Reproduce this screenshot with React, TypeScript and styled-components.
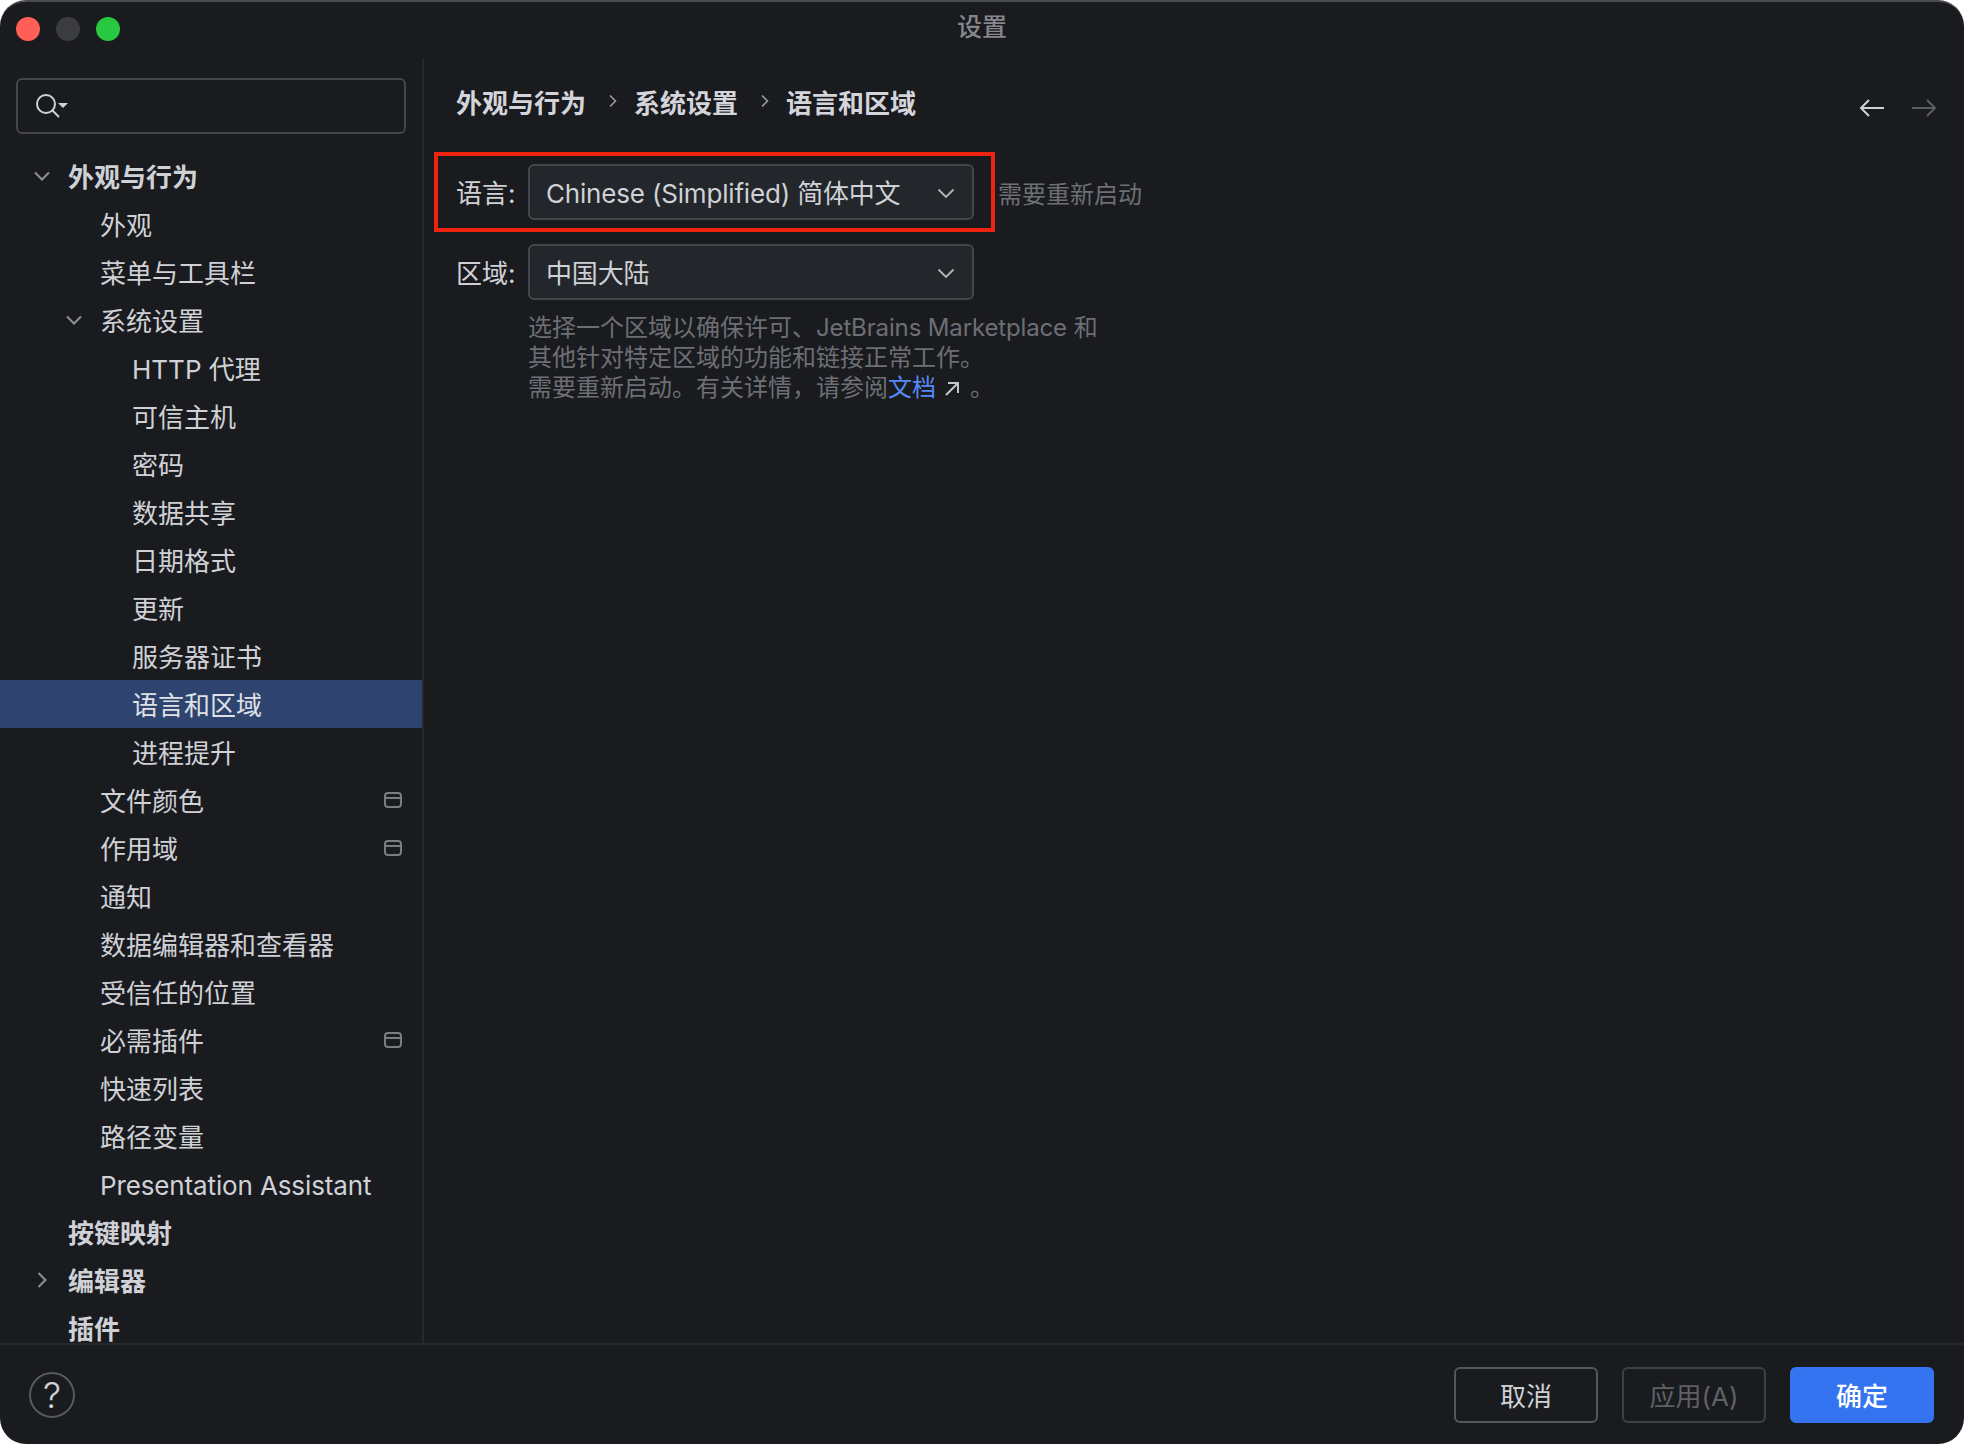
import React from 'react';
import styled, { createGlobalStyle } from 'styled-components';

const GlobalStyle = createGlobalStyle`
  html, body {
    margin: 0;
    padding: 0;
    background: #ffffff;
  }
  body {
    font-family: Inter, "Noto Sans CJK SC", sans-serif;
  }
`;

const colors = {
  bg: '#1a1b1f',
  line: '#26282c',
  text: '#cfd1d6',
  muted: '#6d6f75',
  border: '#44464b',
  selected: '#2e436e',
  blue: '#3574f0',
  link: '#548af7',
};

const Window = styled.div`
  width: 1964px;
  height: 1444px;
  background: ${colors.bg};
  border-radius: 26px;
  border-top: 2px solid #4a4b4f;
  box-sizing: border-box;
  display: flex;
  flex-direction: column;
  overflow: hidden;
  color: ${colors.text};
  font-size: 26px;
`;

const TitleBar = styled.div`
  height: 56px;
  flex: none;
  display: flex;
  align-items: center;
  position: relative;
  padding-left: 16px;
  gap: 16px;
`;

const Light = styled.span<{ $color: string }>`
  width: 24px;
  height: 24px;
  margin-top: -2px;
  border-radius: 50%;
  background: ${p => p.$color};
`;

const WindowTitle = styled.div`
  position: absolute;
  left: 0;
  right: 0;
  top: 7px;
  line-height: 36px;
  text-align: center;
  font-size: 25px;
  font-weight: 500;
  color: #85878c;
`;

const Body = styled.div`
  flex: 1;
  display: flex;
  min-height: 0;
`;

const Sidebar = styled.aside`
  width: 422px;
  flex: none;
  border-right: 2px solid ${colors.line};
  display: flex;
  flex-direction: column;
  overflow: hidden;
`;

const SearchBox = styled.div`
  margin: 20px 16px 18px 16px;
  height: 56px;
  flex: none;
  box-sizing: border-box;
  border: 2px solid ${colors.border};
  border-radius: 6px;
  display: flex;
  align-items: center;
  padding-left: 17px;
`;

const Row = styled.div<{ $depth: number; $bold?: boolean; $selected?: boolean; $latin?: boolean }>`
  height: 48px;
  flex: none;
  box-sizing: border-box;
  position: relative;
  display: flex;
  align-items: center;
  padding-left: ${p => 68 + p.$depth * 32}px;
  padding-bottom: ${p => (p.$latin ? 0 : 2)}px;
  padding-top: ${p => (p.$latin ? 2 : 0)}px;
  letter-spacing: ${p => (p.$latin ? '-0.13px' : 'normal')};
  background: ${p => (p.$selected ? colors.selected : 'transparent')};
  color: ${p => (p.$selected ? '#dfe1e6' : colors.text)};
  font-weight: ${p => (p.$bold ? 700 : 400)};
  white-space: nowrap;
`;

const Caret = styled.svg<{ $depth: number }>`
  position: absolute;
  left: ${p => 32 + p.$depth * 32}px;
  top: 14px;
  width: 20px;
  height: 20px;
  fill: none;
  stroke: #8f9197;
  stroke-width: 2;
`;

const ModuleIcon = styled.svg`
  position: absolute;
  left: 383px;
  top: 15px;
  width: 20px;
  height: 18px;
  fill: none;
  stroke: #7a7c82;
  stroke-width: 2;
`;

const Main = styled.main`
  flex: 1;
  min-width: 0;
  padding-left: 32px;
  position: relative;
`;

const Breadcrumbs = styled.div`
  height: 48px;
  margin-top: 19px;
  display: flex;
  align-items: center;
  font-weight: 700;
  color: #d3d5da;
`;

const CrumbSeparator = styled.svg`
  width: 10px;
  height: 16px;
  margin: 0 16px 0 22px;
  fill: none;
  stroke: #9a9ca1;
  stroke-width: 1.6;
`;

const NavArrows = styled.div`
  position: absolute;
  right: 27px;
  top: 40px;
  display: flex;
  gap: 26px;
`;

const NavArrow = styled.svg<{ $disabled?: boolean }>`
  width: 26px;
  height: 20px;
  fill: none;
  stroke: ${p => (p.$disabled ? '#5c5e63' : '#cfd1d6')};
  stroke-width: 2;
`;

const FieldRow = styled.div<{ $top: number }>`
  margin-top: ${p => p.$top}px;
  display: flex;
  align-items: center;
  position: relative;
  height: 56px;
`;

const FieldLabel = styled.label`
  width: 72px;
  flex: none;
  padding-bottom: 2px;
`;

const Combo = styled.div`
  width: 446px;
  height: 56px;
  flex: none;
  box-sizing: border-box;
  border: 2px solid ${colors.border};
  border-radius: 6px;
  background: #23262a;
  display: flex;
  align-items: center;
  justify-content: space-between;
  padding: 0 16px 0 16px;
  white-space: nowrap;
`;

const ComboText = styled.span`
  padding-bottom: 2px;
  letter-spacing: -0.18px;
`;

const ComboCaret = styled.svg`
  width: 20px;
  height: 20px;
  margin-top: 2px;
  fill: none;
  stroke: #b4b6bb;
  stroke-width: 1.8;
`;

const Hint = styled.span`
  margin-left: 24px;
  font-size: 24px;
  color: ${colors.muted};
  white-space: nowrap;
`;

const Highlight = styled.div`
  position: absolute;
  left: -22px;
  top: -12px;
  width: 561px;
  height: 80px;
  box-sizing: border-box;
  border: 4px solid #f0230f;
  pointer-events: none;
`;

const HelpText = styled.div`
  margin: 13px 0 0 72px;
  font-size: 24px;
  line-height: 30px;
  color: ${colors.muted};
  white-space: nowrap;
`;

const ProductName = styled.span`
  letter-spacing: -0.14px;
`;

const DocLink = styled.a`
  color: ${colors.link};
`;

const ExternalIcon = styled.svg`
  width: 16px;
  height: 16px;
  margin: 0 10px 0 8px;
  vertical-align: -1px;
  fill: none;
  stroke: #c4c6cb;
  stroke-width: 2;
`;

const Footer = styled.footer`
  height: 101px;
  flex: none;
  box-sizing: border-box;
  border-top: 2px solid ${colors.line};
  display: flex;
  align-items: center;
  justify-content: space-between;
  padding: 0 30px 0 29px;
`;

const HelpButton = styled.div`
  width: 46px;
  height: 46px;
  box-sizing: border-box;
  border: 2px solid #56585d;
  border-radius: 50%;
  display: flex;
  align-items: center;
  justify-content: center;
  font-size: 36px;
  font-weight: 300;
`;

const Buttons = styled.div`
  display: flex;
  gap: 24px;
`;

const Button = styled.button<{ $variant?: 'primary' | 'disabled' }>`
  width: 144px;
  height: 56px;
  box-sizing: border-box;
  padding: 0;
  font: inherit;
  border-radius: 6px;
  border: 2px solid
    ${p => (p.$variant === 'primary' ? colors.blue : p.$variant === 'disabled' ? '#3e4045' : '#55575c')};
  background: ${p => (p.$variant === 'primary' ? colors.blue : 'transparent')};
  color: ${p => (p.$variant === 'primary' ? '#ffffff' : p.$variant === 'disabled' ? '#5f6166' : colors.text)};
  font-weight: ${p => (p.$variant === 'primary' ? 500 : 400)};
`;

type TreeItem = {
  title: string;
  depth: number;
  bold?: boolean;
  caret?: 'open' | 'closed';
  selected?: boolean;
  module?: boolean;
  latin?: boolean;
};

const tree: TreeItem[] = [
  { title: '外观与行为', depth: 0, bold: true, caret: 'open' },
  { title: '外观', depth: 1 },
  { title: '菜单与工具栏', depth: 1 },
  { title: '系统设置', depth: 1, caret: 'open' },
  { title: 'HTTP 代理', depth: 2 },
  { title: '可信主机', depth: 2 },
  { title: '密码', depth: 2 },
  { title: '数据共享', depth: 2 },
  { title: '日期格式', depth: 2 },
  { title: '更新', depth: 2 },
  { title: '服务器证书', depth: 2 },
  { title: '语言和区域', depth: 2, selected: true },
  { title: '进程提升', depth: 2 },
  { title: '文件颜色', depth: 1, module: true },
  { title: '作用域', depth: 1, module: true },
  { title: '通知', depth: 1 },
  { title: '数据编辑器和查看器', depth: 1 },
  { title: '受信任的位置', depth: 1 },
  { title: '必需插件', depth: 1, module: true },
  { title: '快速列表', depth: 1 },
  { title: '路径变量', depth: 1 },
  { title: 'Presentation Assistant', depth: 1, latin: true },
  { title: '按键映射', depth: 0, bold: true },
  { title: '编辑器', depth: 0, bold: true, caret: 'closed' },
  { title: '插件', depth: 0, bold: true },
];

const Separator = () => (
  <CrumbSeparator viewBox="0 0 10 16">
    <path d="M2 2.5 L7.5 8 L2 13.5" />
  </CrumbSeparator>
);

const ChevronDown = () => (
  <ComboCaret viewBox="0 0 20 20">
    <path d="M2.5 6.5 L10 14 L17.5 6.5" />
  </ComboCaret>
);

export default function App() {
  return (
    <>
      <GlobalStyle />
      <Window>
        <TitleBar>
          <Light $color="#ff5f57" />
          <Light $color="#3b3c40" />
          <Light $color="#28c840" />
          <WindowTitle>设置</WindowTitle>
        </TitleBar>
        <Body>
          <Sidebar>
            <SearchBox>
              <svg width="34" height="26" viewBox="0 0 34 26" fill="none" stroke="#cfd1d6" strokeWidth="2">
                <circle cx="11" cy="11" r="9" />
                <path d="M17.5 17.5 L24 24" />
                <path d="M23 10 H33 L28 15 Z" fill="#cfd1d6" stroke="none" />
              </svg>
            </SearchBox>
            {tree.map(item => (
              <Row
                key={item.title}
                $depth={item.depth}
                $bold={item.bold}
                $selected={item.selected}
                $latin={item.latin}
              >
                {item.caret && (
                  <Caret $depth={item.depth} viewBox="0 0 20 20">
                    <path d={item.caret === 'open' ? 'M3 6.5 L10 13.5 L17 6.5' : 'M6.5 3 L13.5 10 L6.5 17'} />
                  </Caret>
                )}
                {item.title}
                {item.module && (
                  <ModuleIcon viewBox="0 0 20 18">
                    <rect x="2" y="2" width="16" height="14" rx="3" />
                    <path d="M2 7 H18" />
                  </ModuleIcon>
                )}
              </Row>
            ))}
          </Sidebar>
          <Main>
            <Breadcrumbs>
              外观与行为
              <Separator />
              系统设置
              <Separator />
              语言和区域
            </Breadcrumbs>
            <NavArrows>
              <NavArrow viewBox="0 0 26 20">
                <path d="M25 10 H2 M10 2 L2 10 L10 18" />
              </NavArrow>
              <NavArrow $disabled viewBox="0 0 26 20">
                <path d="M1 10 H24 M16 2 L24 10 L16 18" />
              </NavArrow>
            </NavArrows>
            <FieldRow $top={39}>
              <FieldLabel>语言:</FieldLabel>
              <Combo>
                <ComboText>Chinese (Simplified) 简体中文</ComboText>
                <ChevronDown />
              </Combo>
              <Hint>需要重新启动</Hint>
              <Highlight />
            </FieldRow>
            <FieldRow $top={24}>
              <FieldLabel>区域:</FieldLabel>
              <Combo>
                <ComboText>中国大陆</ComboText>
                <ChevronDown />
              </Combo>
            </FieldRow>
            <HelpText>
              选择一个区域以确保许可、<ProductName>JetBrains Marketplace</ProductName> 和
              <br />
              其他针对特定区域的功能和链接正常工作。
              <br />
              需要重新启动。有关详情，请参阅<DocLink>文档</DocLink>
              <ExternalIcon viewBox="0 0 16 16">
                <path d="M2 14 L14 2 M4 2 H14 V12" />
              </ExternalIcon>
              。
            </HelpText>
          </Main>
        </Body>
        <Footer>
          <HelpButton>?</HelpButton>
          <Buttons>
            <Button>取消</Button>
            <Button $variant="disabled">应用(A)</Button>
            <Button $variant="primary">确定</Button>
          </Buttons>
        </Footer>
      </Window>
    </>
  );
}
